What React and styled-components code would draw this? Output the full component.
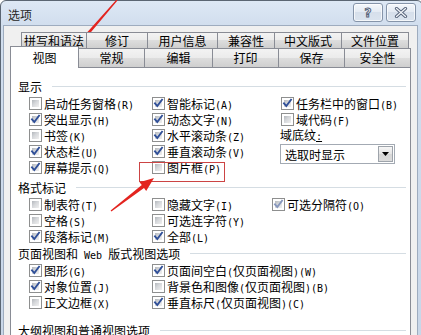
import React from 'react';
import styled, { createGlobalStyle } from 'styled-components';

const Global = createGlobalStyle`
  html, body { margin: 0; padding: 0; background: #fff; overflow: hidden; }
  body {
    width: 421px; height: 335px;
    font-family: "Noto Sans CJK SC", "Noto Sans", sans-serif;
    font-size: 12px; color: #000;
  }
`;

const Stage = styled.div`
  position: relative;
  width: 421px;
  height: 335px;
  overflow: hidden;
`;

const Window = styled.div`
  width: 423px;
  height: 360px;
  box-sizing: border-box;
  border: 1px solid #5b6673;
  border-radius: 6px 6px 0 0;
  background: linear-gradient(#dde8f5, #d1deee 24px, #c8d6e8);
  display: flex;
  flex-direction: column;
`;

const TitleBar = styled.div`
  height: 24px;
  flex: none;
  box-sizing: border-box;
  display: flex;
  align-items: flex-start;
  padding: 2px 6px 0 7px;
`;

const Title = styled.div`
  flex: 1;
  line-height: 24px;
  color: #262626;
`;

const CaptionButton = styled.div`
  width: 30px;
  height: 19px;
  box-sizing: border-box;
  margin-left: ${(p) => p.$gap || 0}px;
  border: 1px solid #8594a9;
  border-radius: 3px;
  background: linear-gradient(#f4f7fb, #e3eaf3 50%, #d6dfeb 50%, #dbe4ef);
  box-shadow: inset 0 0 0 1px rgba(255, 255, 255, 0.7);
  display: flex;
  align-items: center;
  justify-content: center;
`;

const HelpGlyph = styled.span`
  font-family: "DejaVu Sans", sans-serif;
  font-weight: bold;
  font-size: 12px;
  line-height: 1;
  color: #f4f6f9;
  -webkit-text-stroke: 1px #56637a;
`;

const ClientArea = styled.div`
  flex: 1;
  margin: 0 4px 0 2px;
  border: 1px solid #9eacbf;
  border-bottom: none;
  background: #f0f0f0;
  padding-top: 6px;
  display: flex;
  flex-direction: column;
`;

const TabRow = styled.div`
  display: flex;
  align-items: flex-end;
  flex: none;
  height: ${(p) => p.$h}px;
  margin-left: ${(p) => p.$indent}px;
  margin-top: ${(p) => p.$mt || 0}px;
`;

const Tab = styled.div`
  box-sizing: border-box;
  width: ${(p) => p.$w}px;
  height: ${(p) => (p.$active ? 22 : p.$h)}px;
  margin-left: -1px;
  &:first-child { margin-left: 0; }
  margin-bottom: ${(p) => (p.$active ? -1 : 0)}px;
  border: 1px solid #898c95;
  border-bottom: ${(p) => (p.$bottom ? '1px solid #898c95' : 'none')};
  background: ${(p) =>
    p.$active ? '#ffffff' : 'linear-gradient(#f3f3f3, #ebebeb 50%, #dddddd 50%, #cfcfcf)'};
  position: relative;
  z-index: ${(p) => (p.$active ? 2 : 1)};
  display: flex;
  align-items: center;
  justify-content: center;
  line-height: 1;
  white-space: nowrap;
`;

const Panel = styled.div`
  flex: 1;
  margin-left: 6px;
  width: 401px;
  box-sizing: border-box;
  border: 1px solid #898c95;
  border-bottom: none;
  background: #ffffff;
  padding: 10px 4px 0 7px;
`;

const Heading = styled.div`
  display: flex;
  align-items: center;
  height: 16px;
  margin: ${(p) => p.$mt || 0}px 0 1px;
  white-space: pre;
  &::after {
    content: '';
    flex: 1;
    height: 1px;
    margin-left: 10px;
    background: #d5dde3;
  }
`;

const Columns = styled.div`
  display: flex;
  margin-left: 11px;
`;

const Column = styled.div`
  display: flex;
  flex-direction: column;
  flex: ${(p) => (p.$w ? 'none' : '1')};
  width: ${(p) => (p.$w ? `${p.$w}px` : 'auto')};
`;

const Row = styled.div`
  display: flex;
  align-items: center;
  height: 16px;
  gap: 2px;
  white-space: nowrap;
`;

const FieldLabel = styled.div`
  height: 16px;
  line-height: 16px;
  margin-left: -1px;
  white-space: nowrap;
`;

const Box = styled.span`
  width: 13px;
  height: 13px;
  flex: none;
  box-sizing: border-box;
  border: 1px solid #8e8f8f;
  background: #ffffff;
  display: grid;
`;

const BoxFill = styled.span`
  grid-area: 1 / 1;
  margin: 2px;
  background: linear-gradient(135deg, #b3b7bc 0%, #d6d8db 45%, #f0f0f0 100%);
`;

const CheckMark = styled.svg`
  grid-area: 1 / 1;
  width: 11px;
  height: 11px;
`;

const Half = styled.span`
  font-family: "DejaVu Sans Mono", "Liberation Mono", monospace;
  font-size: 10px;
  white-space: pre;
  text-decoration: ${(p) => (p.$u ? 'underline' : 'none')};
`;

const Select = styled.div`
  width: 115px;
  height: 20px;
  margin: 1px 0 0 -1px;
  box-sizing: border-box;
  border: 1px solid #a3aab3;
  background: #ffffff;
  display: flex;
  align-items: center;
  padding: 0 1px 0 4px;
`;

const SelectText = styled.span`
  flex: 1;
  white-space: nowrap;
`;

const SelectButton = styled.span`
  width: 15px;
  height: 16px;
  box-sizing: border-box;
  border: 1px solid #9ea4ab;
  background: linear-gradient(#f6f6f6, #e4e4e4 50%, #d6d6d6 50%, #dcdcdc);
  display: flex;
  align-items: center;
  justify-content: center;
`;

const Overlay = styled.svg`
  position: absolute;
  left: 0;
  top: 0;
  width: 421px;
  height: 335px;
  pointer-events: none;
`;

function Txt({ children }) {
  const parts = children.split(/([\x20-\x7e]+)/);
  return (
    <span>
      {parts.map((s, i) =>
        !s ? null : /[\x20-\x7e]/.test(s) ? <Half key={i}>{s}</Half> : <React.Fragment key={i}>{s}</React.Fragment>
      )}
    </span>
  );
}

function Check({ checked, dim, label }) {
  return (
    <Row>
      <Box>
        <BoxFill />
        {checked && (
          <CheckMark viewBox="0 0 11 11">
            <path
              d="M2 5.3 L4.3 8 L9 1.8"
              fill="none"
              stroke={dim ? '#8797bd' : '#2f4f98'}
              strokeWidth="1.9"
              strokeLinecap="square"
              strokeLinejoin="miter"
            />
          </CheckMark>
        )}
      </Box>
      <Txt>{label}</Txt>
    </Row>
  );
}

function arrowPoints(tx, ty, hx, hy, headLen, headW, tailW, neckW) {
  const dx = hx - tx;
  const dy = hy - ty;
  const len = Math.hypot(dx, dy);
  const ux = dx / len;
  const uy = dy / len;
  const px = -uy;
  const py = ux;
  const bx = hx - ux * headLen;
  const by = hy - uy * headLen;
  const pts = [
    [tx + (px * tailW) / 2, ty + (py * tailW) / 2],
    [bx + (px * neckW) / 2, by + (py * neckW) / 2],
    [bx + (px * headW) / 2, by + (py * headW) / 2],
    [hx, hy],
    [bx - (px * headW) / 2, by - (py * headW) / 2],
    [bx - (px * neckW) / 2, by - (py * neckW) / 2],
    [tx - (px * tailW) / 2, ty - (py * tailW) / 2],
  ];
  return pts.map((p) => p.map((v) => v.toFixed(1)).join(',')).join(' ');
}

const row1 = [
  ['拼写和语法', 66],
  ['修订', 62],
  ['用户信息', 71],
  ['兼容性', 58],
  ['中文版式', 68],
  ['文件位置', 68],
];

const row2 = [
  ['视图', 69, true],
  ['常规', 67],
  ['编辑', 69],
  ['打印', 67],
  ['保存', 67],
  ['安全性', 67],
];

const display1 = [
  ['启动任务窗格(R)', false],
  ['突出显示(H)', true],
  ['书签(K)', false],
  ['状态栏(U)', true],
  ['屏幕提示(Q)', true],
];
const display2 = [
  ['智能标记(A)', true],
  ['动态文字(N)', true],
  ['水平滚动条(Z)', true],
  ['垂直滚动条(V)', true],
  ['图片框(P)', false],
];
const display3 = [
  ['任务栏中的窗口(B)', true],
  ['域代码(F)', false],
];

const marks1 = [
  ['制表符(T)', false],
  ['空格(S)', false],
  ['段落标记(M)', true],
];
const marks2 = [
  ['隐藏文字(I)', false],
  ['可选连字符(Y)', false],
  ['全部(L)', true],
];

const page1 = [
  ['图形(G)', true],
  ['对象位置(J)', true],
  ['正文边框(X)', false],
];
const page2 = [
  ['页面间空白(仅页面视图)(W)', true],
  ['背景色和图像(仅页面视图)(B)', false],
  ['垂直标尺(仅页面视图)(C)', true],
];

const renderChecks = (items) => items.map(([l, c]) => <Check key={l} label={l} checked={c} />);

export default function App() {
  return (
    <Stage>
      <Global />
      <Window>
        <TitleBar>
          <Title>选项</Title>
          <CaptionButton>
            <HelpGlyph>?</HelpGlyph>
          </CaptionButton>
          <CaptionButton $gap={3}>
            <svg width="14" height="11" viewBox="0 0 14 11">
              <path d="M2.5 1.5 L11.5 9.5 M11.5 1.5 L2.5 9.5" stroke="#56637a" strokeWidth="3.2" strokeLinecap="round" />
              <path d="M2.5 1.5 L11.5 9.5 M11.5 1.5 L2.5 9.5" stroke="#f2f5f9" strokeWidth="1.3" strokeLinecap="round" />
            </svg>
          </CaptionButton>
        </TitleBar>
        <ClientArea>
          <TabRow $h={17} $indent={17}>
            {row1.map(([t, w]) => (
              <Tab key={t} $w={w} $h={17} $bottom>
                {t}
              </Tab>
            ))}
          </TabRow>
          <TabRow $h={19} $indent={6} $mt={-1}>
            {row2.map(([t, w, a]) => (
              <Tab key={t} $w={w} $h={19} $active={a}>
                {t}
              </Tab>
            ))}
          </TabRow>
          <Panel>
            <Heading>显示</Heading>
            <Columns>
              <Column $w={123}>{renderChecks(display1)}</Column>
              <Column $w={129}>{renderChecks(display2)}</Column>
              <Column>
                {renderChecks(display3)}
                <FieldLabel>
                  域底纹<Half $u>:</Half>
                </FieldLabel>
                <Select>
                  <SelectText>选取时显示</SelectText>
                  <SelectButton>
                    <svg width="7" height="4" viewBox="0 0 7 4">
                      <path d="M0 0 H7 L3.5 4 Z" fill="#000" />
                    </svg>
                  </SelectButton>
                </Select>
              </Column>
            </Columns>

            <Heading $mt={4}>格式标记</Heading>
            <Columns>
              <Column $w={123}>{renderChecks(marks1)}</Column>
              <Column $w={120}>{renderChecks(marks2)}</Column>
              <Column>
                <Check label="可选分隔符(O)" checked dim />
              </Column>
            </Columns>

            <Heading $mt={1}>
              <Txt>页面视图和 Web 版式视图选项</Txt>
            </Heading>
            <Columns>
              <Column $w={123}>{renderChecks(page1)}</Column>
              <Column>{renderChecks(page2)}</Column>
            </Columns>

            <Heading $mt={12}>大纲视图和普通视图选项</Heading>
          </Panel>
        </ClientArea>
      </Window>

      <Overlay viewBox="0 0 421 335">
        <rect x="139.5" y="162.5" width="85" height="19" fill="none" stroke="#cc4444" strokeWidth="1" />
        <polygon points={arrowPoints(117, 0, 65, 60, 16, 12, 1.2, 3.5)} fill="#e3241f" />
        <polygon points={arrowPoints(111, 211, 154, 178, 14, 11, 1.2, 3.5)} fill="#e3241f" />
      </Overlay>
    </Stage>
  );
}
